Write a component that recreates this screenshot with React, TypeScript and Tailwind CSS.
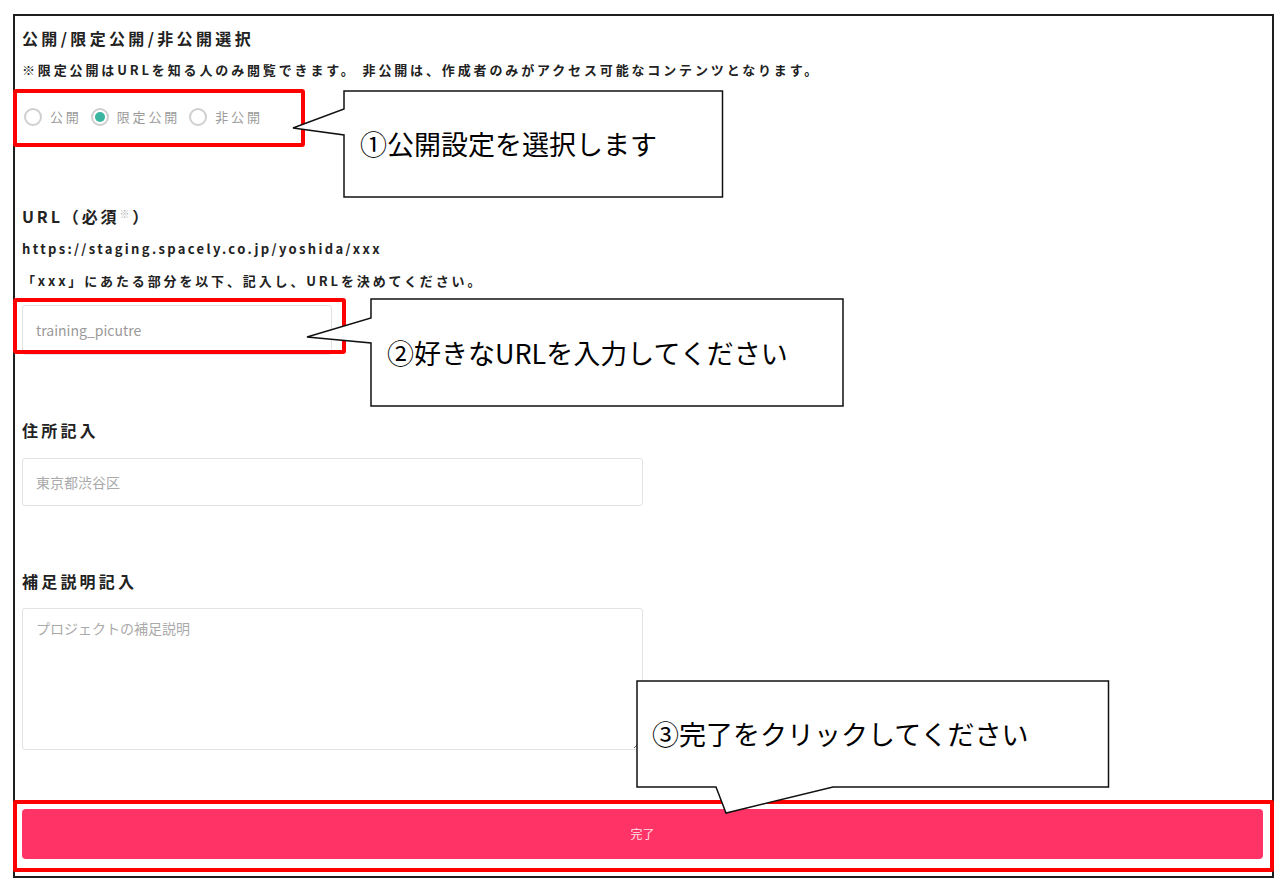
import React from "react";

function Radio({ label, checked }: { label: string; checked?: boolean }) {
  return (
    <div className="flex items-center">
      <span className="flex h-[18px] w-[18px] items-center justify-center rounded-full border-2 border-[#cfcfcf] bg-white">
        {checked && <span className="h-[10px] w-[10px] rounded-full bg-[#3bb5a0]" />}
      </span>
      <span className="ml-[8px] mr-[9px] text-[13px] leading-[20px] tracking-[0.22em] text-[#9a9a9a]">{label}</span>
    </div>
  );
}

function CalloutText({ left, top, children }: { left: number; top: number; children: React.ReactNode }) {
  return (
    <div
      className="absolute flex h-[40px] items-center whitespace-nowrap text-[27px] leading-none text-black"
      style={{ left, top }}
    >
      {children}
    </div>
  );
}

export default function App() {
  return (
    <div className="relative h-[888px] w-[1284px] overflow-hidden bg-white pl-[13px] pt-[14px] font-['Noto_Sans_CJK_JP',sans-serif] text-[#222]">
      <div className="flex h-[864px] w-[1261px] flex-col border-2 border-[#1e1e1e] px-[7px]">
        <div className="mt-[11px] h-[22px] text-[16px] font-bold leading-[22px] tracking-[0.21em]">
          公開/限定公開/非公開選択
        </div>
        <div className="mt-[11px] h-[20px] whitespace-nowrap text-[13px] font-bold leading-[20px] tracking-[0.22em]">
          ※限定公開はURLを知る人のみ閲覧できます。 非公開は、作成者のみがアクセス可能なコンテンツとなります。
        </div>
        <div className="mt-[27px] flex h-[20px] items-center pl-[2px]">
          <Radio label="公開" />
          <Radio label="限定公開" checked />
          <Radio label="非公開" />
        </div>
        <div className="mt-[78px] h-[22px] text-[16px] font-bold leading-[22px] tracking-[0.18em]">
          URL（必須<sup className="text-[10px] font-normal text-[#aaa]">※</sup>）
        </div>
        <div className="mt-[12px] h-[20px] text-[13px] font-bold leading-[20px] tracking-[0.18em]">
          https://staging.spacely.co.jp/yoshida/xxx
        </div>
        <div className="mt-[12px] h-[20px] whitespace-nowrap text-[13px] font-bold leading-[20px] tracking-[0.22em]">
          「xxx」にあたる部分を以下、記入し、URLを決めてください。
        </div>
        <div className="mt-[14px] flex h-[50px] w-[310px] items-center rounded-[3px] border border-[#e3e3e3] px-[13px] text-[14px] text-[#9a9a9a]">
          training_picutre
        </div>
        <div className="mt-[64px] h-[22px] text-[16px] font-bold leading-[22px] tracking-[0.2em]">住所記入</div>
        <div className="mt-[17px] flex h-[48px] w-[621px] items-center rounded-[3px] border border-[#e3e3e3] px-[13px] text-[14px] text-[#aaa]">
          東京都渋谷区
        </div>
        <div className="mt-[64px] h-[22px] text-[16px] font-bold leading-[22px] tracking-[0.2em]">補足説明記入</div>
        <textarea
          className="mt-[16px] h-[142px] w-[621px] rounded-[3px] border border-[#e3e3e3] px-[13px] pt-[9px] text-[14px] outline-none placeholder:text-[#aaa]"
          placeholder="プロジェクトの補足説明"
        />
        <div className="mt-[59px] flex h-[50px] w-[1241px] items-center justify-center rounded-[4px] bg-[#ff3366] text-[12px] text-[#ffe4ec]">
          完了
        </div>
      </div>

      {/* red highlight boxes */}
      <div className="absolute left-[13px] top-[89px] h-[58px] w-[292px] rounded-[3px] border-4 border-[#ff0000]" />
      <div className="absolute left-[13px] top-[298px] h-[56px] w-[333px] rounded-[3px] border-4 border-[#ff0000]" />
      <div className="absolute left-[13px] top-[800px] h-[72px] w-[1261px] rounded-[2px] border-4 border-[#ff0000]" />

      {/* callouts */}
      <svg className="pointer-events-none absolute left-0 top-0" width="1284" height="888">
        <path
          d="M344,91 H722.5 V197 H344 V135 L293,128 L344,109 Z"
          fill="#fff"
          stroke="#111"
          strokeWidth="1.5"
        />
        <path
          d="M371,299 H843 V406 H371 V343 L307,337 L371,318 Z"
          fill="#fff"
          stroke="#111"
          strokeWidth="1.5"
        />
        <path
          d="M637,681 H1108.5 V787 H833 L726,813 L716,787 H637 Z"
          fill="#fff"
          stroke="#111"
          strokeWidth="1.5"
        />
      </svg>
      <CalloutText left={360} top={123}>①公開設定を選択します</CalloutText>
      <CalloutText left={387} top={332}>②好きなURLを入力してください</CalloutText>
      <CalloutText left={652} top={713}>③完了をクリックしてください</CalloutText>
    </div>
  );
}
